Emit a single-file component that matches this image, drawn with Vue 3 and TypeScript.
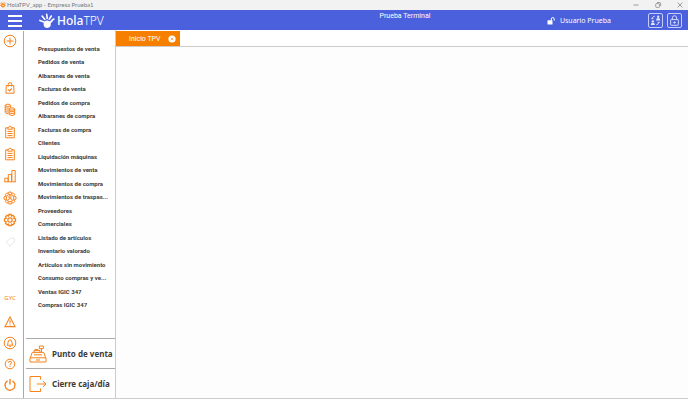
<script setup lang="ts">
import { ref } from 'vue'

interface RailItem {
  id: string
  label: string
}

const topRail: RailItem[] = [
  { id: 'bag', label: 'Ventas' },
  { id: 'coins', label: 'Caja' },
  { id: 'clipboard', label: 'Pedidos' },
  { id: 'clipboard', label: 'Albaranes' },
  { id: 'chart', label: 'Informes' },
  { id: 'usergear', label: 'Usuarios' },
  { id: 'gear', label: 'Configuración' },
  { id: 'tag', label: 'Etiquetas' },
]

const bottomRail: RailItem[] = [
  { id: 'warning', label: 'Avisos' },
  { id: 'bell', label: 'Notificaciones' },
  { id: 'help', label: 'Ayuda' },
  { id: 'power', label: 'Salir' },
]

const entries: string[] = [
  'Presupuestos de venta',
  'Pedidos de venta',
  'Albaranes de venta',
  'Facturas de venta',
  'Pedidos de compra',
  'Albaranes de compra',
  'Facturas de compra',
  'Clientes',
  'Liquidación máquinas',
  'Movimientos de venta',
  'Movimientos de compra',
  'Movimientos de traspas...',
  'Proveedores',
  'Comerciales',
  'Listado de artículos',
  'Inventario valorado',
  'Artículos sin movimiento',
  'Consumo compras y ve...',
  'Ventas IGIC 347',
  'Compras IGIC 347',
]

const menuOpen = ref(true)
</script>

<template>
  <div class="app">
    <div class="titlebar">
      <svg class="app-icon" viewBox="0 0 10 10" aria-hidden="true">
        <g stroke="#f58a1f" stroke-width="1.4" stroke-linecap="round">
          <path d="M1 2.5l2 1.5M3.2 1l.9 2M6.8 1l-.9 2M9 2.5l-2 1.5M.8 5.5h1.6M9.2 5.5H7.6" />
        </g>
        <circle cx="5" cy="6.2" r="3" fill="#f57c00" />
        <circle cx="5" cy="6" r="1.2" fill="#fff" />
      </svg>
      <span class="window-title">HolaTPV_app - Empresa Prueba1</span>
      <div class="window-controls">
        <button type="button" aria-label="Minimizar">
          <svg viewBox="0 0 8 8"><path d="M1.5 4h5" /></svg>
        </button>
        <button type="button" aria-label="Restaurar">
          <svg viewBox="0 0 8 8"><rect x="1.7" y="2.6" width="3.8" height="3.8" rx=".8" /><path d="M3 1.5h2.8q.8 0 .8.8V5" /></svg>
        </button>
        <button type="button" aria-label="Cerrar">
          <svg viewBox="0 0 8 8"><path d="M1.6 1.6l4.8 4.8M6.4 1.6L1.6 6.4" /></svg>
        </button>
      </div>
    </div>

    <header class="header">
      <div class="header-left">
        <button type="button" class="burger" aria-label="Menú" @click="menuOpen = !menuOpen">
          <span></span><span></span><span></span>
        </button>
        <svg class="hand" viewBox="0 0 16 16" aria-hidden="true">
          <g stroke="#fff" stroke-linecap="round" fill="none">
            <path d="M.9 7.4l4 1.5M3.1 3l2.8 3.4M7.7 1.3l.5 4.2M12.3 3l-2 3.2" stroke-width="1.6" />
            <path d="M14.8 6.2c-1.6.2-1.9 2.6-4.3 3.6" stroke-width="1.7" />
          </g>
          <path d="M4.8 9.3q1.4-2.2 4-1.8 3 .6 3 3.6 0 3.8-3.6 3.9-3 0-3.6-3.3z" fill="#fff" />
        </svg>
        <div class="brand"><strong>Hola</strong>TPV</div>
      </div>
      <div class="terminal">Prueba Terminal</div>
      <div class="header-right">
        <svg class="unlock" viewBox="0 0 8 8" aria-hidden="true">
          <rect x=".5" y="3.2" width="5" height="4.4" rx=".6" fill="#fff" />
          <path d="M4.3 3.8V2a1.400 1.400 0 0 1 2.900 0V3.600" fill="none" stroke="#fff" />
        </svg>
        <span class="user">Usuario Prueba</span>
        <button type="button" class="square" aria-label="Cambiar usuario">
          <svg viewBox="0 0 12 12">
            <g fill="#dfe4ff">
              <circle cx="3.1" cy="7" r="1.3" />
              <path d="M.8 11q0-2.5 2.3-2.5T5.4 11z" />
              <circle cx="8.9" cy="1.9" r="1.3" />
              <path d="M6.6 5.9q0-2.5 2.3-2.5t2.3 2.5z" />
            </g>
            <path d="M5.2 1.3Q2.5 1.3 2.5 4.3M1.4 3.3l1.1 1.2 1.1-1.2M6.8 10.7q2.7 0 2.7-3M8.4 8.6l1.1-1.2 1.1 1.2" fill="none" stroke="#dfe4ff" stroke-width=".9" />
          </svg>
        </button>
        <button type="button" class="square" aria-label="Bloquear">
          <svg viewBox="0 0 12 12" fill="none" stroke="#dfe4ff">
            <rect x="1.8" y="5" width="8.4" height="6.2" rx=".6" />
            <path d="M3.6 5V3.2a2.4 2.4 0 0 1 4.8 0V5M6 7v2.4M4.6 8.2h2.8" />
          </svg>
        </button>
      </div>
    </header>

    <div class="body">
      <nav class="rail" aria-label="Accesos">
        <button type="button" class="rail-btn add" aria-label="Añadir">
          <svg viewBox="0 0 14 14"><circle cx="7" cy="7" r="5.8" /><path d="M7 3.6v6.8M3.6 7h6.8" /></svg>
        </button>
        <button v-for="(item, i) in topRail" :key="i" type="button" class="rail-btn" :aria-label="item.label">
          <svg viewBox="0 0 14 14">
            <template v-if="item.id === 'bag'">
              <path d="M3.3 4.500h7.400l.4 7.700H2.900zM5.200 5.600V3.400a1.800 1.800 0 0 1 3.600 0v2.200" />
              <path d="M5.300 8.500l1.300 1.300 2.200-2.500" stroke-width="1.2" />
            </template>
            <template v-else-if="item.id === 'coins'">
              <ellipse cx="4.900" cy="2.300" rx="2.700" ry="1.100" />
              <path d="M2.200 2.300v7.300q.5 1.100 3.200 1.100M7.600 2.300v2.500M2.200 4.200q1 1.300 4 .9M2.200 6.100q1 1.300 3.400 1M2.200 8q1 1.300 3.400 1" />
              <ellipse cx="8.900" cy="6" rx="2.800" ry="1.100" />
              <path d="M6.100 6v5.500q2.800 2.200 5.600 0V6M6.100 7.800q2.800 2 5.600 0M6.100 9.700q2.800 2 5.600 0" />
            </template>
            <template v-else-if="item.id === 'clipboard'">
              <path d="M4.8 2.800H2.700v10h8.600v-10H9.200M4.800 4.200V2.400h1a1.200 1.200 0 0 1 2.400 0h1v1.800zM4.500 6.400h5M4.500 8.500h5M4.500 10.600h5" />
            </template>
            <template v-else-if="item.id === 'chart'">
              <path d="M1.8 12.800V9.200H5v3.600M5.300 12.800V5.400h3.200v7.400M8.900 12.800V1.500h3.300v11.300M1.200 12.800h11.600" />
            </template>
            <template v-else-if="item.id === 'usergear'">
              <path d="M5.9 1h2.2l.5 1.5 1.5-.7 1.6 1.6-.7 1.5 2 1v2.2l-2 1 .7 1.5-1.6 1.6-1.5-.7-.5 1.500H5.900l-.5-1.500-1.500.7-1.600-1.600.7-1.500-2-1V5.900l2-1-.7-1.500 1.600-1.600 1.500.7z" />
              <circle cx="7" cy="7" r="3.8" />
              <circle cx="7" cy="5.8" r="1.2" />
              <path d="M4.8 9.6q.2-2 2.2-2t2.2 2" />
            </template>
            <template v-else-if="item.id === 'gear'">
              <path stroke-width="1.3" d="M5.900 1.500h2.200l.4 1.500 1.500-.7 1.500 1.500-.7 1.500 1.700.7v2.100l-1.700.7.7 1.500-1.500 1.500-1.500-.7-.4 1.500H5.900l-.4-1.500-1.500.7-1.500-1.500.7-1.500-1.700-.7V6l1.700-.7-.7-1.500L4 2.300l1.500.7z" />
              <circle cx="7" cy="7" r="2.2" stroke-width="1.2" />
            </template>
            <template v-else>
              <path class="faded" d="M3 7.200l4.600-4h3.600l.4 3.400-4.800 4.400z" />
            </template>
          </svg>
        </button>
        <button type="button" class="rail-text">GYC</button>
        <button v-for="item in bottomRail" :key="item.id" type="button" class="rail-btn low" :aria-label="item.label">
          <svg viewBox="0 0 14 14">
            <template v-if="item.id === 'warning'">
              <path d="M7 2L12 11.600H2zM7 5.200v3.300M7 9.400v1.100" stroke-width="1.1" />
            </template>
            <template v-else-if="item.id === 'bell'">
              <circle cx="7" cy="7" r="5.800" />
              <path d="M4 9.2q1-.8 1-2.6 0-2.6 2-2.8 2 .2 2 2.8 0 1.8 1 2.600zM6.200 10.400h1.600" />
            </template>
            <template v-else-if="item.id === 'help'">
              <circle cx="7" cy="7" r="4.8" />
              <path d="M5.400 5.800q0-1.600 1.600-1.600t1.600 1.400Q8.600 6.500 7 7.200V8.300M7 9.200v.9" />
            </template>
            <template v-else>
              <path d="M4.600 2.800a5 5 0 1 0 4.800 0M7 1v5.600" stroke-width="1.4" />
            </template>
          </svg>
        </button>
      </nav>

      <aside v-show="menuOpen" class="menu">
        <ul class="menu-list">
          <li v-for="entry in entries" :key="entry"><a href="#">{{ entry }}</a></li>
        </ul>
        <button type="button" class="action">
          <svg viewBox="0 0 18 18">
            <path d="M1 12.800h16v4.200H1zM1.300 12.800l2-5.400h11.400l2 5.400M5 7.400V5.600h6v1.800M12.500 7.400V3.600M10.400 1h4v2.600h-4zM5 9.800h8M7 15h4M5.600 4.400h3.600" />
          </svg>
          <span>Punto de venta</span>
        </button>
        <button type="button" class="action">
          <svg viewBox="0 0 18 18">
            <path d="M11.500 4.500V1.500H1v15h10.500v-3M7.800 9H17M14 6.200L17 9l-3 2.800" />
          </svg>
          <span>Cierre caja/día</span>
        </button>
      </aside>

      <main class="content">
        <div class="tabs">
          <div class="tab">
            <span>Inicio TPV</span>
            <button type="button" aria-label="Cerrar pestaña">
              <svg viewBox="0 0 8 8"><circle cx="4" cy="4" r="3.600" fill="#fff" /><path d="M2.700 2.700l2.600 2.600M5.300 2.700L2.700 5.300" stroke="#f9a55a" stroke-width=".9" /></svg>
            </button>
          </div>
        </div>
        <div class="workspace"></div>
      </main>
    </div>
    <footer class="statusbar"></footer>
  </div>
</template>

<style>
body {
  background: #fff;
}
</style>

<style scoped>
.app {
  display: flex;
  flex-direction: column;
  min-height: 100vh;
  box-sizing: border-box;
  font-family: "Noto Sans", "Open Sans", sans-serif;
  color: #3c3c3c;
}
button {
  margin: 0;
  padding: 0;
  border: 0;
  background: none;
  font: inherit;
  color: inherit;
  cursor: pointer;
}
svg {
  display: block;
  flex: none;
}
.titlebar {
  display: flex;
  align-items: center;
  height: 10px;
  background: #f2f2f2;
  font-size: 6px;
  line-height: 10px;
  color: #777;
}
.app-icon {
  width: 6px;
  height: 8px;
  margin-right: 1px;
}
.window-title {
  font-family: Lato, sans-serif;
}
.window-controls {
  display: flex;
  gap: 14px;
  margin-left: auto;
  padding-right: 4px;
}
.window-controls svg {
  width: 8px;
  height: 8px;
  fill: none;
  stroke: #888;
  stroke-width: 0.8;
}
.header {
  display: grid;
  grid-template-columns: 1fr auto 1fr;
  height: 20px;
  background: #4a60dc;
  color: #fff;
}
.header-left,
.header-right {
  display: flex;
  align-items: center;
}
.terminal {
  padding-left: 122px;
  font-family: Roboto, sans-serif;
  font-size: 7px;
  line-height: 12px;
}
.burger {
  display: grid;
  gap: 3px;
  margin-left: 8px;
}
.burger span {
  width: 14px;
  height: 2px;
  background: #fff;
}
.hand {
  width: 16px;
  height: 16px;
  margin-left: 17px;
}
.brand {
  margin-left: 2px;
  font-size: 12px;
  font-weight: 300;
  line-height: 20px;
  padding-top: 1px;
}
.brand strong {
  font-weight: 500;
}
.header-right {
  justify-content: flex-end;
  padding-right: 6px;
}
.unlock {
  width: 8px;
  height: 8px;
  margin-right: 5px;
}
.user {
  margin-right: 37px;
  font-size: 7px;
  white-space: nowrap;
}
.square {
  display: grid;
  place-items: center;
  width: 15px;
  height: 15px;
  box-sizing: border-box;
  border: 1px solid #c5ccfa;
  border-radius: 2px;
}
.square + .square {
  margin-left: 4px;
}
.square svg {
  width: 11px;
  height: 11px;
}
.body {
  display: flex;
  flex: 1;
  border-bottom: 1px solid #ccc;
}
.rail {
  display: flex;
  flex-direction: column;
  align-items: center;
  width: 20px;
  margin-right: 3px;
  padding-bottom: 3px;
}
.rail-btn {
  display: grid;
  place-items: center;
  width: 100%;
  height: 22px;
}
.rail-btn.add {
  margin-bottom: 25px;
}
.rail-btn.low {
  height: 21px;
}
.rail-btn svg {
  width: 14px;
  height: 14px;
  fill: none;
  stroke: #f7821b;
  stroke-width: 1;
}
.rail-btn .faded {
  stroke: #dcdcdc;
  stroke-width: 0.7;
}
.rail-text {
  margin-top: auto;
  margin-bottom: 8px;
  font-size: 6px;
  line-height: 10px;
  color: #f7821b;
}
.menu {
  display: flex;
  flex-direction: column;
  width: 92px;
  margin-top: 1px;
  box-sizing: border-box;
  border-left: 1px solid #aaa;
  padding-left: 2px;
}
.menu-list {
  display: grid;
  grid-auto-rows: 1fr;
  flex: 1;
  margin: 0;
  padding: 11px 0 26px 12px;
  list-style: none;
}
.menu-list li {
  display: flex;
  align-items: center;
  font-family: Roboto, sans-serif;
  font-size: 6px;
  font-weight: 700;
  line-height: 10px;
  white-space: nowrap;
}
.menu-list a {
  color: inherit;
  text-decoration: none;
}
.action {
  display: flex;
  align-items: center;
  height: 30px;
  box-sizing: border-box;
  border-top: 1px solid #aaa;
  padding-left: 3px;
  gap: 5px;
  font-size: 8px;
  font-weight: 700;
  white-space: nowrap;
}
.action svg {
  width: 18px;
  height: 18px;
  fill: none;
  stroke: #f7821b;
  stroke-width: 1;
}
.content {
  display: flex;
  flex: 1;
  flex-direction: column;
  border-left: 1px solid #ccc;
}
.tabs {
  display: flex;
  padding-top: 1px;
  border-bottom: 1px solid #ccc;
}
.tab {
  display: flex;
  align-items: center;
  justify-content: space-between;
  width: 64px;
  height: 15px;
  box-sizing: border-box;
  padding: 0 4px 0 13px;
  background: #f77f00;
  color: #fff;
  font-family: Roboto, sans-serif;
  font-size: 7px;
}
.tab svg {
  width: 8px;
  height: 8px;
}
.workspace {
  flex: 1;
  background: #fdfdfd;
}
.statusbar {
  height: 9px;
}
</style>
